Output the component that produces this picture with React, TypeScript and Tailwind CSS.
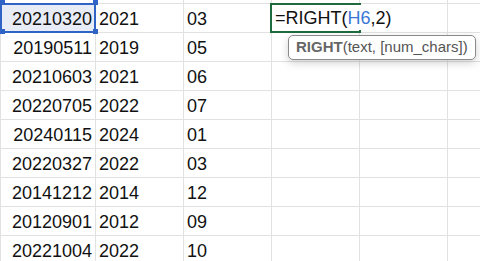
import React from "react";

const ROWS: [string, string, string][] = [
  ["20210320", "2021", "03"],
  ["20190511", "2019", "05"],
  ["20210603", "2021", "06"],
  ["20220705", "2022", "07"],
  ["20240115", "2024", "01"],
  ["20220327", "2022", "03"],
  ["20141212", "2014", "12"],
  ["20120901", "2012", "09"],
  ["20221004", "2022", "10"],
];

const WIDTHS = ["w-[95px]", "w-[88px]", "w-[88px]", "w-[88px]", "w-[88px]", "w-[40px]"];

function Handle({ className }: { className: string }) {
  return <div className={`absolute w-[5px] h-[5px] bg-[#2f64c6] ${className}`} />;
}

export default function App() {
  return (
    <div
      className="w-[480px] h-[261px] overflow-hidden bg-white relative text-[18px] text-[#111]"
      style={{ fontFamily: '"Liberation Sans", Arial, sans-serif' }}
    >
      <div className="flex flex-col border-l border-[#e1e1e1]">
        {/* partial row above */}
        <div className="flex h-[4px]">
          {WIDTHS.map((w, i) => (
            <div key={i} className={`${w} shrink-0 border-r border-b border-[#e1e1e1]`} />
          ))}
        </div>
        {ROWS.map((r, ri) => (
          <div key={ri} className="flex h-[29px]">
            <div
              className={`${WIDTHS[0]} shrink-0 border-r border-b border-[#e1e1e1] flex items-center justify-end pr-[3px] pt-[2px] ${
                ri === 0 ? "bg-[#e8ecf7]" : ""
              }`}
            >
              {r[0]}
            </div>
            <div className={`${WIDTHS[1]} shrink-0 border-r border-b border-[#e1e1e1] flex items-center pl-[3px] pt-[2px]`}>
              {r[1]}
            </div>
            <div className={`${WIDTHS[2]} shrink-0 border-r border-b border-[#e1e1e1] flex items-center pl-[3px] pt-[2px]`}>
              {r[2]}
            </div>
            <div className={`${WIDTHS[3]} shrink-0 border-r border-b border-[#e1e1e1]`} />
            <div className={`${WIDTHS[4]} shrink-0 border-r border-b border-[#e1e1e1]`} />
            <div className={`${WIDTHS[5]} shrink-0 border-r border-b border-[#e1e1e1]`} />
          </div>
        ))}
      </div>

      {/* selected cell A1 */}
      <div className="absolute left-0 top-[3px] w-[96px] h-[30px] border-2 border-[#2f64c6]" />
      <Handle className="left-0 top-0" />
      <Handle className="left-0 top-[29px]" />
      <Handle className="left-[93px] top-[29px]" />
      <Handle className="left-[93px] top-0" />

      {/* editing cell D1 */}
      <div className="absolute left-[270px] top-[3px] w-[91px] h-[30px] border-2 border-[#1e6b3e] bg-white" />
      <div className="absolute left-[272px] top-[5px] h-[25px] bg-white flex items-center pl-[3px] pr-[2px] pt-[2px] whitespace-nowrap">
        <span>=RIGHT(</span>
        <span className="text-[#3a78d6]">H6</span>
        <span>,2)</span>
      </div>

      {/* function tooltip */}
      <div className="absolute left-[288px] top-[35px] w-[188px] h-[25px] rounded-[5px] border border-[#8a8a8a] bg-white shadow-[0_3px_8px_rgba(0,0,0,0.18)] flex items-center pl-[7px] text-[15px] text-[#555] whitespace-nowrap">
        <span className="font-bold text-[#666]">RIGHT</span>
        <span>(text, [num_chars])</span>
      </div>
    </div>
  );
}
